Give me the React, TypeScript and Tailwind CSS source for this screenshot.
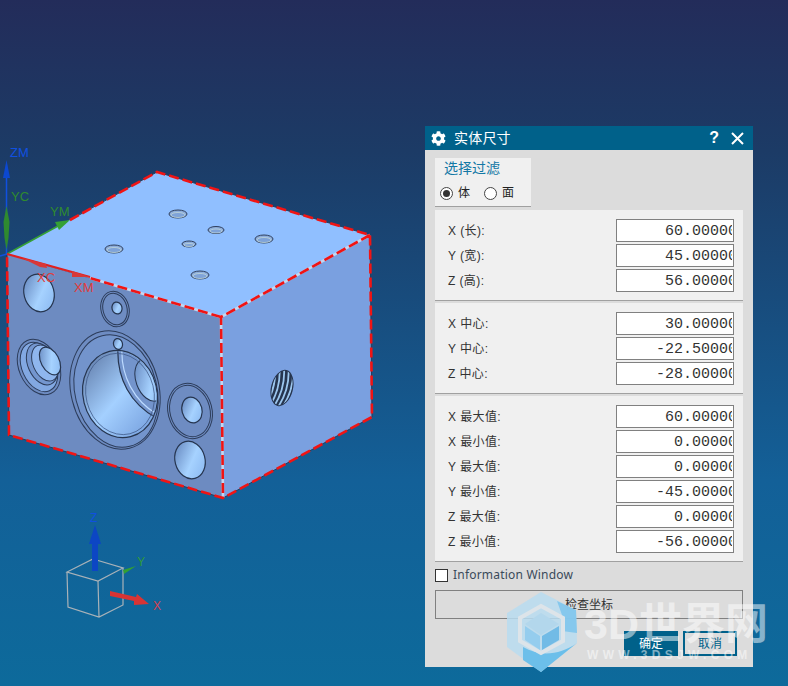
import React from "react";
import { FaCog } from "react-icons/fa";

const cjk = "font-['Liberation_Sans','Noto_Sans_CJK_SC',sans-serif]";

const sections = [
  [
    ["X (长):", "60.00000"],
    ["Y (宽):", "45.00000"],
    ["Z (高):", "56.00000"],
  ],
  [
    ["X 中心:", "30.00000"],
    ["Y 中心:", "-22.50000"],
    ["Z 中心:", "-28.00000"],
  ],
  [
    ["X 最大值:", "60.00000"],
    ["X 最小值:", "0.00000"],
    ["Y 最大值:", "0.00000"],
    ["Y 最小值:", "-45.00000"],
    ["Z 最大值:", "0.00000"],
    ["Z 最小值:", "-56.00000"],
  ],
];

// top face counterbored holes
const topHoles = [
  [178, 214, 9, 4],
  [216, 230, 8, 3.5],
  [189, 244, 7, 3],
  [264, 239, 9, 4],
  [114, 249, 9, 4],
  [200, 275, 9, 4],
];

const Hole = ({ x, y, rx, ry, rot = -15 }: { x: number; y: number; rx: number; ry: number; rot?: number }) => (
  <ellipse cx={x} cy={y} rx={rx} ry={ry} transform={`rotate(${rot} ${x} ${y})`} fill="url(#bore)" stroke="#26354f" strokeWidth="1.2" />
);

const Ring = ({ x, y, rx, ry, rot = -15, fill = "#6e8cc2" }: { x: number; y: number; rx: number; ry: number; rot?: number; fill?: string }) => (
  <ellipse cx={x} cy={y} rx={rx} ry={ry} transform={`rotate(${rot} ${x} ${y})`} fill={fill} stroke="#2c3c5a" strokeWidth="1" />
);

const Model = () => (
  <svg className="absolute inset-0" width="788" height="686" viewBox="0 0 788 686">
    <defs>
      <linearGradient id="bore" x1="0" y1="0" x2="1" y2="1">
        <stop offset="0" stopColor="#5d7db6" />
        <stop offset="0.55" stopColor="#a6d2ff" />
        <stop offset="1" stopColor="#86b4ee" />
      </linearGradient>
      <linearGradient id="cone" x1="0" y1="0" x2="0.6" y2="1">
        <stop offset="0" stopColor="#58719f" />
        <stop offset="0.6" stopColor="#a4d0ff" />
        <stop offset="1" stopColor="#7fa9e4" />
      </linearGradient>
      <clipPath id="bigBore">
        <ellipse cx="120" cy="394" rx="36" ry="43" transform="rotate(-14 120 394)" />
      </clipPath>
      <clipPath id="thread">
        <ellipse cx="282" cy="388" rx="10" ry="17.5" transform="rotate(14 282 388)" />
      </clipPath>
    </defs>

    {/* block faces */}
    <polygon points="157,172 370,235 221,317 7,254" fill="#90bfff" />
    <polygon points="7,254 221,317 223,498 9,435" fill="#6d8bc1" />
    <polygon points="221,317 370,235 372,417 223,498" fill="#7aa0e0" />

    {/* top holes */}
    {topHoles.map(([x, y, rx, ry], i) => (
      <g key={i}>
        <ellipse cx={x} cy={y} rx={rx} ry={ry} fill="#8eaedb" stroke="#2f3f5d" strokeWidth="1" />
        <ellipse cx={x} cy={y + 1} rx={rx - 2} ry={ry - 1.5} fill="#7fa3d8" stroke="#c8dcd8" strokeWidth="0.7" />
      </g>
    ))}

    {/* left face features */}
    <Hole x={39} y={293} rx={15} ry={19} />
    <Ring x={115} y={309} rx={14} ry={18} />
    <Ring x={115} y={309} rx={12} ry={16} />
    <Hole x={117} y={308} rx={5} ry={6} />

    <Ring x={39} y={367} rx={20} ry={29} rot={-24} />
    <Ring x={39} y={367} rx={17} ry={26} rot={-24} fill="#82a8e2" />
    <Ring x={42} y={364} rx={14} ry={22} rot={-24} fill="#7496cf" />
    <Ring x={45} y={363} rx={12} ry={19} rot={-24} fill="#8fb6ee" />
    <Hole x={50} y={361} rx={9} ry={15} rot={-28} />

    <Ring x={115} y={390} rx={44} ry={60} rot={-14} />
    <Ring x={116} y={391} rx={41} ry={57} rot={-14} fill="#7394cc" />
    <ellipse cx={120} cy={394} rx={37} ry={44} transform="rotate(-14 120 394)" fill="url(#cone)" stroke="#26354f" strokeWidth="1.2" />
    <g clipPath="url(#bigBore)">
      <path d="M118 345 C116 378 130 405 160 420 L170 345 Z" fill="#7394cc" stroke="#26354f" strokeWidth="1.2" />
      <path d="M122 345 C120 376 134 402 160 416" fill="none" stroke="#bcdaff" strokeWidth="1.2" />
      <ellipse cx={150} cy={380} rx={14} ry={22} transform="rotate(-20 150 380)" fill="url(#bore)" stroke="#26354f" strokeWidth="1" />
    </g>
    <ellipse cx={120} cy={394} rx={34} ry={41} transform="rotate(-14 120 394)" fill="none" stroke="#3d5684" strokeWidth="0.7" />
    <Hole x={118} y={344} rx={4.5} ry={5.5} />

    <Ring x={190} y={411} rx={22} ry={28} />
    <Ring x={190} y={411} rx={20} ry={26} />
    <Hole x={192} y={410} rx={10} ry={13} />
    <Hole x={190} y={460} rx={15} ry={19} />

    {/* threaded hole */}
    <ellipse cx={282} cy={388} rx={11} ry={18.5} transform="rotate(14 282 388)" fill="#26354f" />
    <g clipPath="url(#thread)" fill="none" stroke="#9cc6ee" strokeWidth="1.8">
      {[-6, -1.5, 3, 7.5, 12].map((d) => (
        <path key={d} d={`M${281 + d} 368 C${282 + d} 382 ${278 + d} 396 ${270 + d} 408`} />
      ))}
    </g>

    {/* selection highlight */}
    <g fill="none" strokeLinecap="butt">
      <path d="M70 220 L157 172 L370 235 L372 417 L223 498 L9 435 L7 254 M221 317 L223 498 M221 317 L370 235 M221 317 L90 278" stroke="#2a3a58" strokeWidth="1" />
      <path d="M221 317 L223 498 M90 278 L221 317 L370 235" stroke="#c4d6f0" strokeWidth="2.6" />
      <path
        d="M70 220 L157 172 L370 235 L372 417 L223 498 L9 435 L7 254 M370 235 L221 317 L223 498 M221 317 L90 278"
        stroke="#f01414"
        strokeWidth="2.6"
        strokeDasharray="10 4"
      />
    </g>

    {/* WCS triad */}
    <line x1="0" y1="256" x2="7" y2="254" stroke="#1050e0" strokeWidth="1.5" />
    <line x1="6.5" y1="254" x2="6.5" y2="170" stroke="#1050e0" strokeWidth="1.5" />
    <polygon points="6.5,160 3,178 10,178" fill="#0c48d0" />
    <polygon points="6.5,206 3.5,222 4.5,238 6.5,250 8.5,238 9.5,222" fill="#2f8a2f" />
    <line x1="7" y1="254" x2="58" y2="226" stroke="#35a035" strokeWidth="1.6" />
    <polygon points="70,220 55,222 59,230" fill="#35a035" />
    <line x1="7" y1="254" x2="90" y2="277" stroke="#e02020" strokeWidth="2.2" />
    <polygon points="22,258 46,264 47,268 40,267" fill="#d83838" />
    <polygon points="72,271 90,277 72,277" fill="#d83838" />

    {/* corner triad */}
    <g fill="none" stroke="#a9b2b8" strokeWidth="1.2">
      <path d="M93 559 L123 568 L98 581 L67 572 Z" />
      <path d="M67 572 L68 607 L99 617 L123 605 L123 568 M98 581 L99 617" />
    </g>
    <rect x="92" y="541" width="6" height="30" fill="#0c46c4" />
    <polygon points="95,525 89,544 101,544" fill="#0c46c4" />
    <polygon points="123,570 136,566 124,574" fill="#33a033" />
    <polygon points="110,591 136,597 137,594 149,604 134,605 134,601 110,596" fill="#d83434" />
  </svg>
);

const Watermark = () => (
  <div className="absolute inset-0 overflow-hidden pointer-events-none">
    <svg className="absolute left-[500px] top-[585px]" width="84" height="92" viewBox="0 0 84 92">
      <polygon points="41,7 76,25 77,58 41,87 7,62 7,28" fill="#b9dcf0" fillOpacity="0.85" />
      <polygon points="57,16 76,25 77,48 62,46 62,30" fill="#80c5ec" fillOpacity="0.9" />
      <path d="M23 62 C40 72 60 70 77 58 L41 87 L23 75 Z" fill="#6cbfea" />
      <polygon points="41,21 63,33 63,56 41,68 20,56 20,33" fill="none" stroke="#dde4e9" strokeWidth="4" />
      <polygon points="41,28 59,39 41,50 25,39" fill="#b3d7ec" />
      <polygon points="25,41 40,51 40,65 25,55" fill="#95cdee" />
      <polygon points="42,51 59,41 59,55 42,65" fill="#72bbe6" />
    </svg>
    <div className="absolute left-[584px] top-[600px] text-[43px] leading-[48px] font-bold text-white/50 font-['Liberation_Sans','Noto_Sans_CJK_SC',sans-serif] whitespace-nowrap">
      3D世界网
    </div>
    <div className="absolute left-[587px] top-[648px] text-[12px] leading-[14px] tracking-[4.3px] font-bold text-white/50 font-['Liberation_Sans',sans-serif] whitespace-nowrap">
      WWW.3DSJW.COM
    </div>
  </div>
);

const Row = ({ label, value }: { label: string; value: string }) => (
  <div className="flex items-center justify-between h-[23px]">
    <span className={`pt-[1px] text-[12px] text-[#333333] tracking-[0.4px] ${cjk}`}>{label}</span>
    <div className="w-[118px] h-[23px] bg-white border border-[#808080] pr-[1px] flex">
      <div className="flex-1 flex justify-end items-center overflow-hidden pt-[2px]">
        <span className="text-[15px] leading-[20px] text-[#333333] font-['Liberation_Mono',monospace] mr-[-5px] whitespace-nowrap">{value}</span>
      </div>
    </div>
  </div>
);

export default function App() {
  return (
    <div className="relative w-[788px] h-[686px] overflow-hidden bg-[linear-gradient(180deg,#232c5a_0%,#1c3b66_22%,#136098_70%,#0d6a9b_100%)]">
      <Model />

      {/* viewport labels */}
      <span className="absolute left-[10px] top-[146px] text-[13px] leading-[14px] text-[#1050e0] font-['Liberation_Sans',sans-serif]">ZM</span>
      <span className="absolute left-[11px] top-[190px] text-[13px] leading-[14px] text-[#2f8a2f] font-['Liberation_Sans',sans-serif]">YC</span>
      <span className="absolute left-[50px] top-[205px] text-[13px] leading-[14px] text-[#2f8a2f] font-['Liberation_Sans',sans-serif]">YM</span>
      <span className="absolute left-[37px] top-[271px] text-[13px] leading-[14px] text-[#e03c3c] font-['Liberation_Sans',sans-serif]">XC</span>
      <span className="absolute left-[74px] top-[281px] text-[13px] leading-[14px] text-[#e03c3c] font-['Liberation_Sans',sans-serif]">XM</span>
      <span className="absolute left-[90px] top-[511px] text-[12px] leading-[14px] text-[#1050e0] font-['Liberation_Sans',sans-serif]">Z</span>
      <span className="absolute left-[137px] top-[555px] text-[12px] leading-[14px] text-[#2f9a3a] font-['Liberation_Sans',sans-serif]">Y</span>
      <span className="absolute left-[153px] top-[599px] text-[12px] leading-[14px] text-[#d84050] font-['Liberation_Sans',sans-serif]">X</span>

      {/* dialog */}
      <div className="absolute left-[425px] top-[126px] w-[328px] h-[541px] bg-[#dcdcdc] flex flex-col">
        <div className="h-[24px] bg-[#00618a] flex items-center pl-[6px] pr-[9px] text-white">
          <FaCog size={15} />
          <span className={`ml-[8px] text-[14px] tracking-[0.2px] ${cjk}`}>实体尺寸</span>
          <span className="ml-auto text-[16px] font-bold font-['Liberation_Sans',sans-serif]">?</span>
          <svg className="ml-[12px]" width="13" height="13" viewBox="0 0 13 13">
            <path d="M1 1 L12 12 M12 1 L1 12" stroke="#ffffff" strokeWidth="2" />
          </svg>
        </div>

        <div className="flex flex-col px-[10px] pt-[8px]">
          <div className="w-[96px] h-[49px] bg-[#f0f0f0] border-b border-[#a0a0a0] pl-[5px] flex flex-col">
            <span className={`pl-[4px] mt-[1px] text-[14px] leading-[18px] text-[#1378a5] ${cjk}`}>选择过滤</span>
            <div className="flex items-center mt-[7px] text-[12px] text-[#222222]">
              <span className="w-[13px] h-[13px] rounded-full bg-white border border-[#444444] flex items-center justify-center">
                <span className="w-[7px] h-[7px] rounded-full bg-[#333333]" />
              </span>
              <span className={`ml-[5px] ${cjk}`}>体</span>
              <span className="ml-[14px] w-[13px] h-[13px] rounded-full bg-white border border-[#444444]" />
              <span className={`ml-[5px] ${cjk}`}>面</span>
            </div>
          </div>

          {sections.map((rows, i) => (
            <div key={i} className={`${i === 0 ? "mt-[3px]" : "mt-[2px]"} bg-[#f0f0f0] border-b border-[#a0a0a0] pl-[13px] pr-[9px] pt-[9px] pb-[8px] flex flex-col gap-[2px]`}>
              {rows.map(([label, value]) => (
                <Row key={label} label={label} value={value} />
              ))}
            </div>
          ))}

          <div className="flex items-center mt-[6px] h-[14px]">
            <span className="w-[13px] h-[13px] bg-white border border-[#333333]" />
            <span className="ml-[5px] text-[12px] tracking-[0.2px] text-[#3a4a5a] font-['Noto_Sans',sans-serif]">Information Window</span>
          </div>

          <div className={`mt-[8px] h-[29px] border border-[#808080] flex items-center justify-center text-[12px] text-[#333333] ${cjk}`}>
            检查坐标
          </div>

          <div className="flex justify-end gap-[5px] mt-[12px] pr-[6px]">
            <div className={`w-[54px] h-[25px] bg-[#00618a] text-white text-[12px] flex items-center justify-center ${cjk}`}>确定</div>
            <div className={`w-[54px] h-[25px] border-2 border-[#00618a] text-[#00618a] text-[12px] flex items-center justify-center ${cjk}`}>取消</div>
          </div>
        </div>
      </div>

      <Watermark />
    </div>
  );
}
